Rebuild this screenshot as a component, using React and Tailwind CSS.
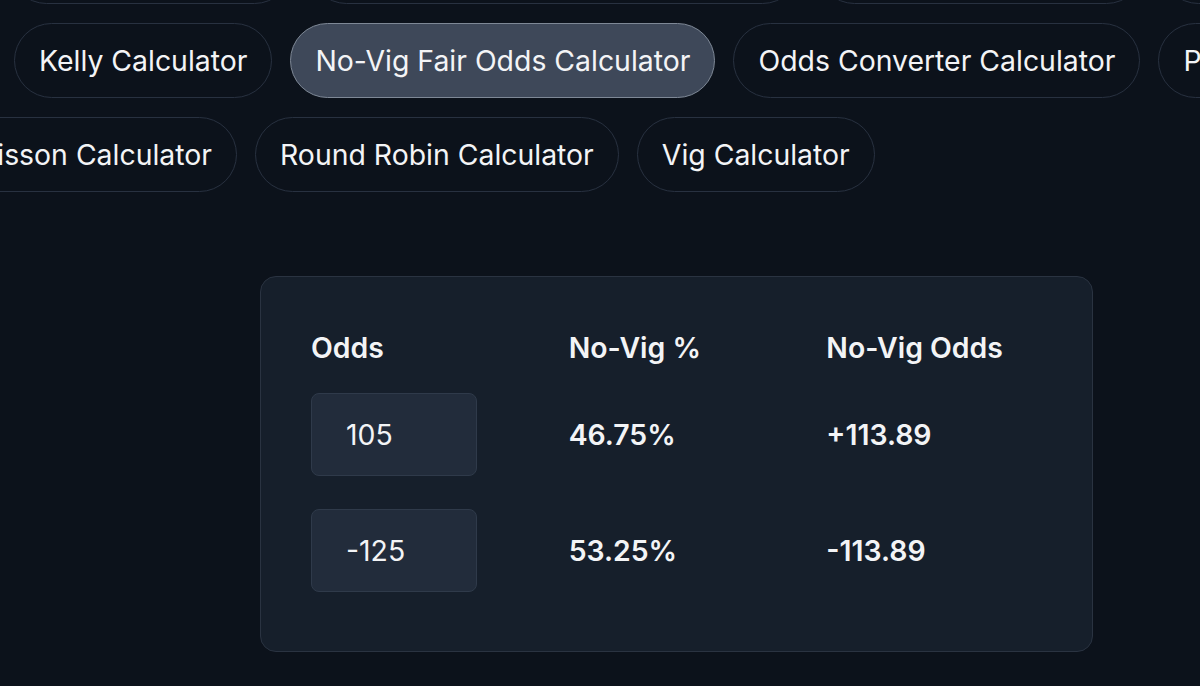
import React from "react";

const pillBase =
  "shrink-0 h-[75px] flex items-center justify-center px-[24px] rounded-full border text-[28.4px] leading-[42px] whitespace-nowrap text-[#f3f4f6]";

function Pill({ label, active = false, className = "" }) {
  return (
    <button
      className={
        pillBase +
        " " +
        (active
          ? "bg-[#3e4859] border-[#7e8896]"
          : "bg-transparent border-[#283140]") +
        " " +
        className
      }
    >
      {label}
    </button>
  );
}

const rows = [
  { label: "105", pct: "46.75%", odds: "+113.89" },
  { label: "-125", pct: "53.25%", odds: "-113.89" },
];

export default function App() {
  return (
    <div
      className="w-full h-screen overflow-hidden bg-[#0c121b] text-[#f3f4f6]"
      style={{ fontFamily: "Inter, 'Noto Sans', sans-serif" }}
    >
      {/* Calculator tabs */}
      <div className="flex flex-col gap-y-[19px] mt-[-71px]">
        <div className="flex gap-x-[17px]">
          <div className="w-[292px] shrink-0 flex justify-end">
            <Pill label="Hedge Calculator" />
          </div>
          <Pill label="Expected Value Calculator" className="w-[491px]" />
          <Pill label="Hold Calculator" className="w-[327px]" />
          <Pill label="Implied Probability Calculator" />
        </div>
        <div className="flex gap-x-[18px] pl-[14px]">
          <Pill label="Kelly Calculator" />
          <Pill label="No-Vig Fair Odds Calculator" active />
          <Pill label="Odds Converter Calculator" />
          <Pill label="Parlay Calculator" />
        </div>
        <div className="flex gap-x-[18px]">
          <div className="w-[237px] shrink-0 flex justify-end">
            <Pill label="Poisson Calculator" />
          </div>
          <Pill label="Round Robin Calculator" />
          <Pill label="Vig Calculator" />
        </div>
      </div>

      {/* Result card */}
      <div className="ml-[260px] mt-[84px] w-[833px] rounded-[16px] border border-[#2a3341] bg-[#161f2b] px-[50px] pt-[50px] pb-[59px]">
        <div className="grid grid-cols-3 gap-x-[42px] text-[28.4px] leading-[42px] font-semibold">
          <div>Odds</div>
          <div>No-Vig %</div>
          <div>No-Vig Odds</div>
        </div>
        <div className="mt-[24px] flex flex-col gap-y-[33px]">
          {rows.map((r) => (
            <div
              key={r.label}
              className="grid grid-cols-3 gap-x-[42px] items-center text-[28.4px] leading-[42px]"
            >
              <div className="w-[166px] h-[83px] flex items-center rounded-[8px] border border-[#2f3a4a] bg-[#222c3b] pl-[34px]">
                {r.label}
              </div>
              <div className="font-semibold">{r.pct}</div>
              <div className="font-semibold">{r.odds}</div>
            </div>
          ))}
        </div>
      </div>
    </div>
  );
}
